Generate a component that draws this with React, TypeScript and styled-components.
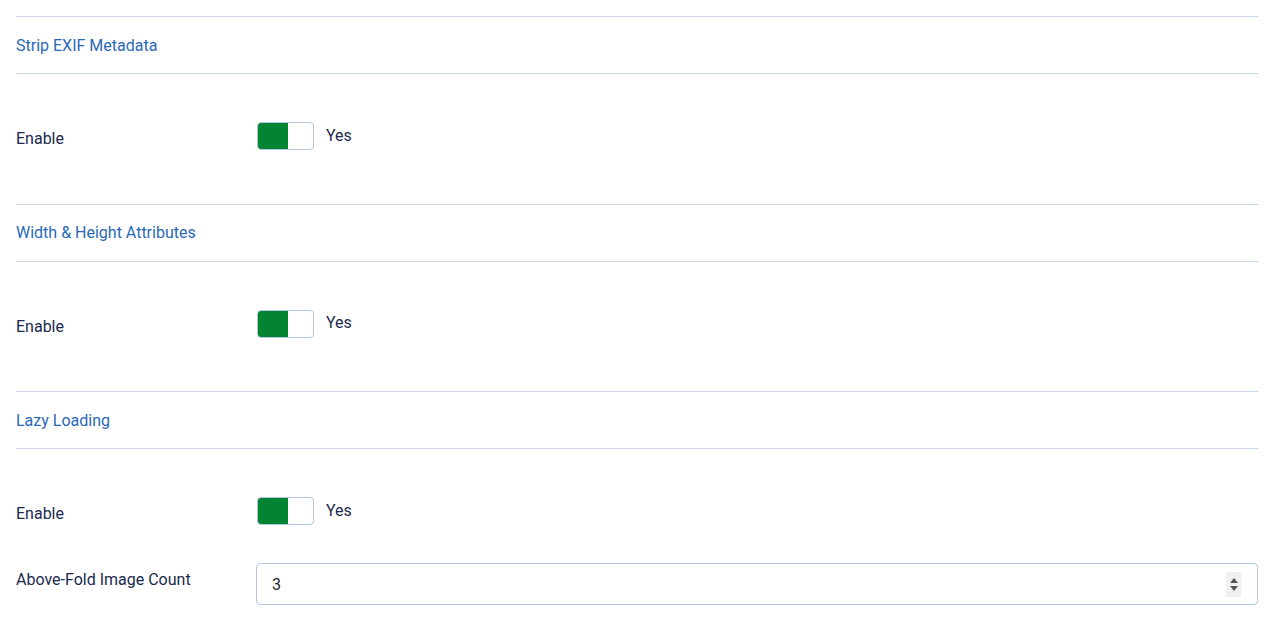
import React from "react";
import styled, { createGlobalStyle } from "styled-components";

const Global = createGlobalStyle`
  html, body { margin: 0; padding: 0; background: #fff; }
  body { font-family: Roboto, "Noto Sans", "Liberation Sans", sans-serif; font-size: 16px; color: #1b2a4e; }
  * { box-sizing: border-box; }
`;

const Page = styled.div`
  padding: 16px 16px 0 16px;
`;

const Fieldset = styled.section`
  display: flex;
  flex-direction: column;
`;

const Legend = styled.div`
  height: 58px;
  border-top: 1px solid #c9d6e8;
  border-bottom: 1px solid #c9d6e8;
  display: flex;
  align-items: center;
  color: #2a69b8;
  font-size: 16px;
  line-height: 1;
  padding-top: 1px;
`;

const Rows = styled.div`
  display: flex;
  flex-direction: column;
  gap: 38px;
  padding: 48px 0 53.5px 0;
`;

const Row = styled.div`
  display: flex;
  align-items: flex-start;
`;

const Label = styled.div`
  width: 240px;
  flex: none;
  padding-top: 8px;
  line-height: 18px;
  font-size: 16px;
  color: #1b2a4e;
`;

const SwitchWrap = styled.div`
  display: flex;
  align-items: center;
  gap: 12px;
  padding-left: 1px;
`;

const Switch = styled.div`
  width: 57px;
  height: 28px;
  border: 1px solid #b3c5df;
  border-radius: 4px;
  display: flex;
  overflow: hidden;
`;

const Knob = styled.div<{ $on: boolean }>`
  width: 30px;
  height: 100%;
  background: ${(p) => (p.$on ? "#028432" : "transparent")};
`;

const SwitchText = styled.span`
  font-size: 16px;
  color: #1b2a4e;
  line-height: 18px;
  margin-top: -1px;
`;

const NumberBox = styled.div`
  flex: 1;
  height: 42px;
  border: 1px solid #b3c5df;
  border-radius: 4px;
  display: flex;
  align-items: center;
  padding: 0 16px 0 15px;
  font-size: 16px;
  color: #22262a;
`;

const NumberValue = styled.span`
  flex: 1;
  padding-top: 1px;
`;

const Spinner = styled.div`
  width: 15px;
  height: 25px;
  background: #f0f0f0;
  display: flex;
  flex-direction: column;
  align-items: center;
  justify-content: center;
  gap: 3px;
`;

const Arrow = styled.div<{ $up?: boolean }>`
  width: 0;
  height: 0;
  border-left: 4px solid transparent;
  border-right: 4px solid transparent;
  ${(p) => (p.$up ? "border-bottom: 5px solid #555;" : "border-top: 5px solid #555;")}
`;

const Toggle = ({ on }: { on: boolean }) => (
  <SwitchWrap>
    <Switch>
      <Knob $on={on} />
    </Switch>
    <SwitchText>Yes</SwitchText>
  </SwitchWrap>
);

export default function App() {
  return (
    <>
      <Global />
      <Page>
        <Fieldset>
          <Legend>Strip EXIF Metadata</Legend>
          <Rows>
            <Row>
              <Label>Enable</Label>
              <Toggle on />
            </Row>
          </Rows>
        </Fieldset>
        <Fieldset>
          <Legend>Width &amp; Height Attributes</Legend>
          <Rows>
            <Row>
              <Label>Enable</Label>
              <Toggle on />
            </Row>
          </Rows>
        </Fieldset>
        <Fieldset>
          <Legend>Lazy Loading</Legend>
          <Rows>
            <Row>
              <Label>Enable</Label>
              <Toggle on />
            </Row>
            <Row>
              <Label>Above-Fold Image Count</Label>
              <NumberBox>
                <NumberValue>3</NumberValue>
                <Spinner>
                  <Arrow $up />
                  <Arrow />
                </Spinner>
              </NumberBox>
            </Row>
          </Rows>
        </Fieldset>
      </Page>
    </>
  );
}
